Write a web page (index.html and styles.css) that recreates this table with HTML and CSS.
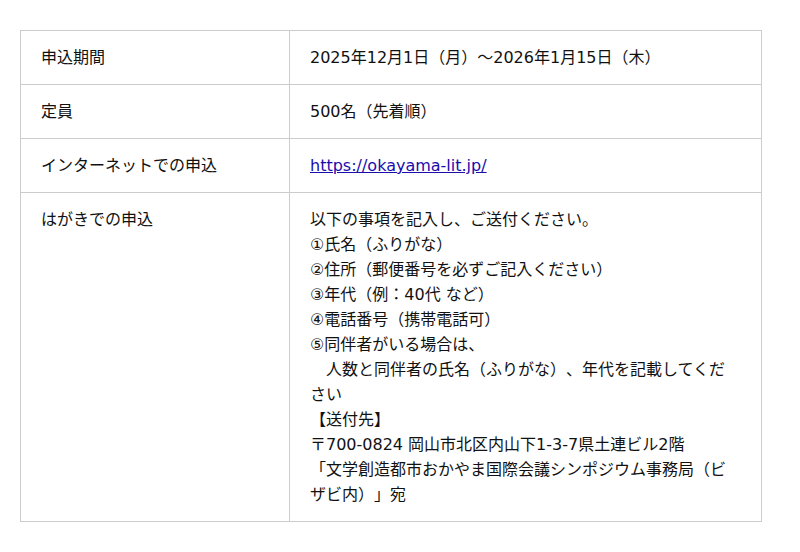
FILE: index.html
```html
<!DOCTYPE html>
<html lang="ja">
<head>
<meta charset="utf-8">
<title>申込方法</title>
<link rel="stylesheet" href="styles.css">
</head>
<body>
<main class="page">
  <table class="info">
    <colgroup>
      <col class="col-label">
      <col class="col-value">
    </colgroup>
    <tbody>
      <tr>
        <th>申込期間</th>
        <td>2025年12月1日（月）～2026年1月15日（木）</td>
      </tr>
      <tr>
        <th>定員</th>
        <td>500名（先着順）</td>
      </tr>
      <tr>
        <th>インターネットでの申込</th>
        <td><a href="https://okayama-lit.jp/">https://okayama-lit.jp/</a></td>
      </tr>
      <tr>
        <th>はがきでの申込</th>
        <td>以下の事項を記入し、ご送付ください。<br>①氏名（ふりがな）<br>②住所（郵便番号を必ずご記入ください）<br>③年代（例：40代 など）<br>④電話番号（携帯電話可）<br>⑤同伴者がいる場合は、<br>　人数と同伴者の氏名（ふりがな）、年代を記載してください<br>【送付先】<br>〒700-0824 岡山市北区内山下1-3-7県土連ビル2階<br>「文学創造都市おかやま国際会議シンポジウム事務局（ビザビ内）」宛</td>
      </tr>
    </tbody>
  </table>
</main>
</body>
</html>
```

FILE: styles.css
```css
html, body {
  margin: 0;
  padding: 0;
  background: #ffffff;
}

.page {
  padding: 30px 20px;
  font-family: "DejaVu Sans", "Noto Sans CJK JP", sans-serif;
  font-size: 16px;
  line-height: 25px;
  color: #111111;
  text-spacing-trim: space-all;
}

.info {
  width: 742px;
  table-layout: fixed;
  border-collapse: collapse;
  line-break: strict;
}

.col-label {
  width: 269px;
}

.info th,
.info td {
  border: 1px solid #cccccc;
  padding: 14px 20px;
  text-align: left;
  vertical-align: top;
  font-weight: normal;
}

.info a {
  color: #1a0dab;
  text-decoration: underline;
}
```
